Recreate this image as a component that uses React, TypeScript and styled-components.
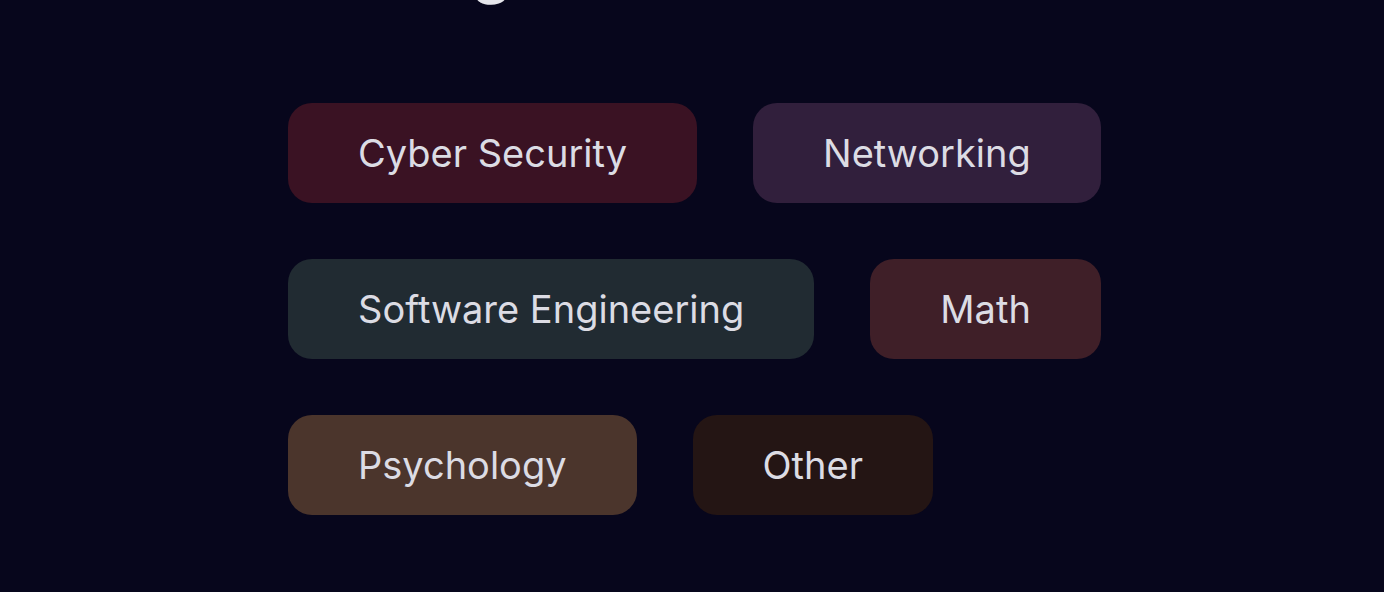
import React from "react";
import styled, { createGlobalStyle } from "styled-components";

const Global = createGlobalStyle`
  html, body { margin: 0; padding: 0; background: #07061c; }
  body { font-family: Inter, "Noto Sans", sans-serif; overflow: hidden; }
`;

const Page = styled.div`
  width: 1384px;
  height: 592px;
  background: #07061c;
  overflow: hidden;
  display: flex;
  flex-direction: column;
  padding-left: 288px;
  box-sizing: border-box;
`;

const Heading = styled.h1`
  margin: -64px 0 0 0;
  padding-left: 38px;
  height: 64px;
  font-size: 64px;
  line-height: 64px;
  font-weight: 700;
  color: #e6e6ec;
  white-space: nowrap;
`;

const TagList = styled.div`
  margin-top: 103px;
  width: 840px;
  display: flex;
  flex-wrap: wrap;
  gap: 56px;
`;

const Tag = styled.button<{ $bg: string }>`
  height: 100px;
  padding: 0 70px;
  border: none;
  border-radius: 24px;
  background: ${(p) => p.$bg};
  color: #dcdce4;
  font-family: Inter, "Noto Sans", sans-serif;
  font-size: 38px;
  font-weight: 400;
  cursor: pointer;
  white-space: nowrap;
`;

const tags = [
  { label: "Cyber Security", bg: "#3a1223" },
  { label: "Networking", bg: "#311f3c" },
  { label: "Software Engineering", bg: "#212b32" },
  { label: "Math", bg: "#3f1f28" },
  { label: "Psychology", bg: "#4b352c" },
  { label: "Other", bg: "#241514" },
];

export default function App() {
  return (
    <>
      <Global />
      <Page>
        <Heading>Categories</Heading>
        <TagList>
          {tags.map((t) => (
            <Tag key={t.label} $bg={t.bg}>
              {t.label}
            </Tag>
          ))}
        </TagList>
      </Page>
    </>
  );
}
